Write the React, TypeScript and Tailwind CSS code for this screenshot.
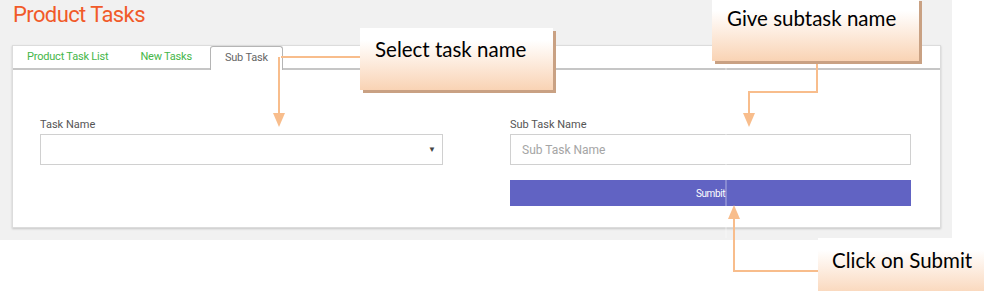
const tabs = [
  { label: 'Product Task List', active: false, ml: 'ml-[14px]' },
  { label: 'New Tasks', active: false, ml: 'ml-[32px]' },
  { label: 'Sub Task', active: true, ml: 'ml-[18px]' },
]

function Callout({ text, className }: { text: string; className: string }) {
  return (
    <div
      className={`absolute bg-gradient-to-b from-white from-20% to-[#f9d3b4] shadow-[3px_3px_0_#c9a183] font-['Lato','Open_Sans',sans-serif] text-[20.5px] text-black leading-none ${className}`}
    >
      {text}
    </div>
  )
}

function Connectors() {
  const stroke = '#f8bd8c'
  return (
    <svg className="absolute inset-0 pointer-events-none" width="984" height="291">
      <line x1="726" y1="0" x2="726" y2="238" stroke="#ffffff" strokeOpacity="0.5" strokeWidth="1" />
      <polyline points="281,57 360,57" fill="none" stroke={stroke} strokeWidth="2" />
      <polyline points="279,57 279,114" fill="none" stroke={stroke} strokeWidth="2" />
      <polygon points="273,113 285,113 279,127" fill={stroke} />
      <polyline points="817,62 817,92 749,92 749,114" fill="none" stroke={stroke} strokeWidth="2" />
      <polygon points="743,113 755,113 749,127" fill={stroke} />
      <polyline points="818,271 734,271 734,218" fill="none" stroke={stroke} strokeWidth="2" />
      <polygon points="728,219 740,219 734,205" fill={stroke} />
    </svg>
  )
}

export default function App() {
  return (
    <div className="relative w-[984px] h-[291px] bg-white overflow-hidden font-['Roboto',sans-serif]">
      <div className="w-[952px] h-[240px] bg-[#f1f1f1] pt-[1px]">
        <h1 className="pl-[13px] text-[22px] leading-[28px] text-[#f15a29] tracking-[-0.6px]">Product Tasks</h1>

        <div className="ml-[12px] mt-[16px] w-[929px] h-[183px] bg-white border border-[#dcdcdc] shadow-[0_1px_2px_rgba(0,0,0,0.18)]">
          <div className="flex items-end h-[24px] border-b-2 border-[#c6c6c6] text-[11px] tracking-[-0.2px]">
            {tabs.map((t) =>
              t.active ? (
                <div
                  key={t.label}
                  className={`${t.ml} -mb-[2px] h-[24px] px-[14px] flex items-center bg-white border border-b-0 border-[#b5b5b5] rounded-t-[3px] text-[#666]`}
                >
                  {t.label}
                </div>
              ) : (
                <div key={t.label} className={`${t.ml} h-[22px] flex items-center text-[#45b649]`}>
                  {t.label}
                </div>
              )
            )}
          </div>

          <div className="grid grid-cols-[403px_401px] gap-x-[67px] pl-[27px] pt-[48px]">
            <div>
              <div className="text-[11px] leading-[14px] text-[#555] mb-[2px]">Task Name</div>
              <div className="h-[31px] border border-[#d0d0d0] flex items-center justify-end pr-[6px]">
                <span className="text-[8px] text-[#444]">▼</span>
              </div>
            </div>
            <div>
              <div className="text-[11px] leading-[14px] text-[#555] mb-[2px]">Sub Task Name</div>
              <div className="h-[31px] border border-[#d0d0d0] flex items-center pl-[11px] text-[12px] text-[#a5a5a5]">
                Sub Task Name
              </div>
              <button className="mt-[15px] w-full h-[26px] bg-[#6163c3] text-white text-[10px] tracking-[-0.4px]">
                Sumbit
              </button>
            </div>
          </div>
        </div>
      </div>

      <Connectors />
      <Callout text="Select task name" className="left-[360px] top-[28px] w-[193px] h-[62px] pl-[15px] pt-[11px]" />
      <Callout text="Give subtask name" className="left-[712px] top-[-2px] w-[207px] h-[63px] pl-[15px] pt-[10px]" />
      <Callout text="Click on Submit" className="left-[818px] top-[238px] w-[170px] h-[60px] pl-[14px] pt-[12px]" />
    </div>
  )
}
